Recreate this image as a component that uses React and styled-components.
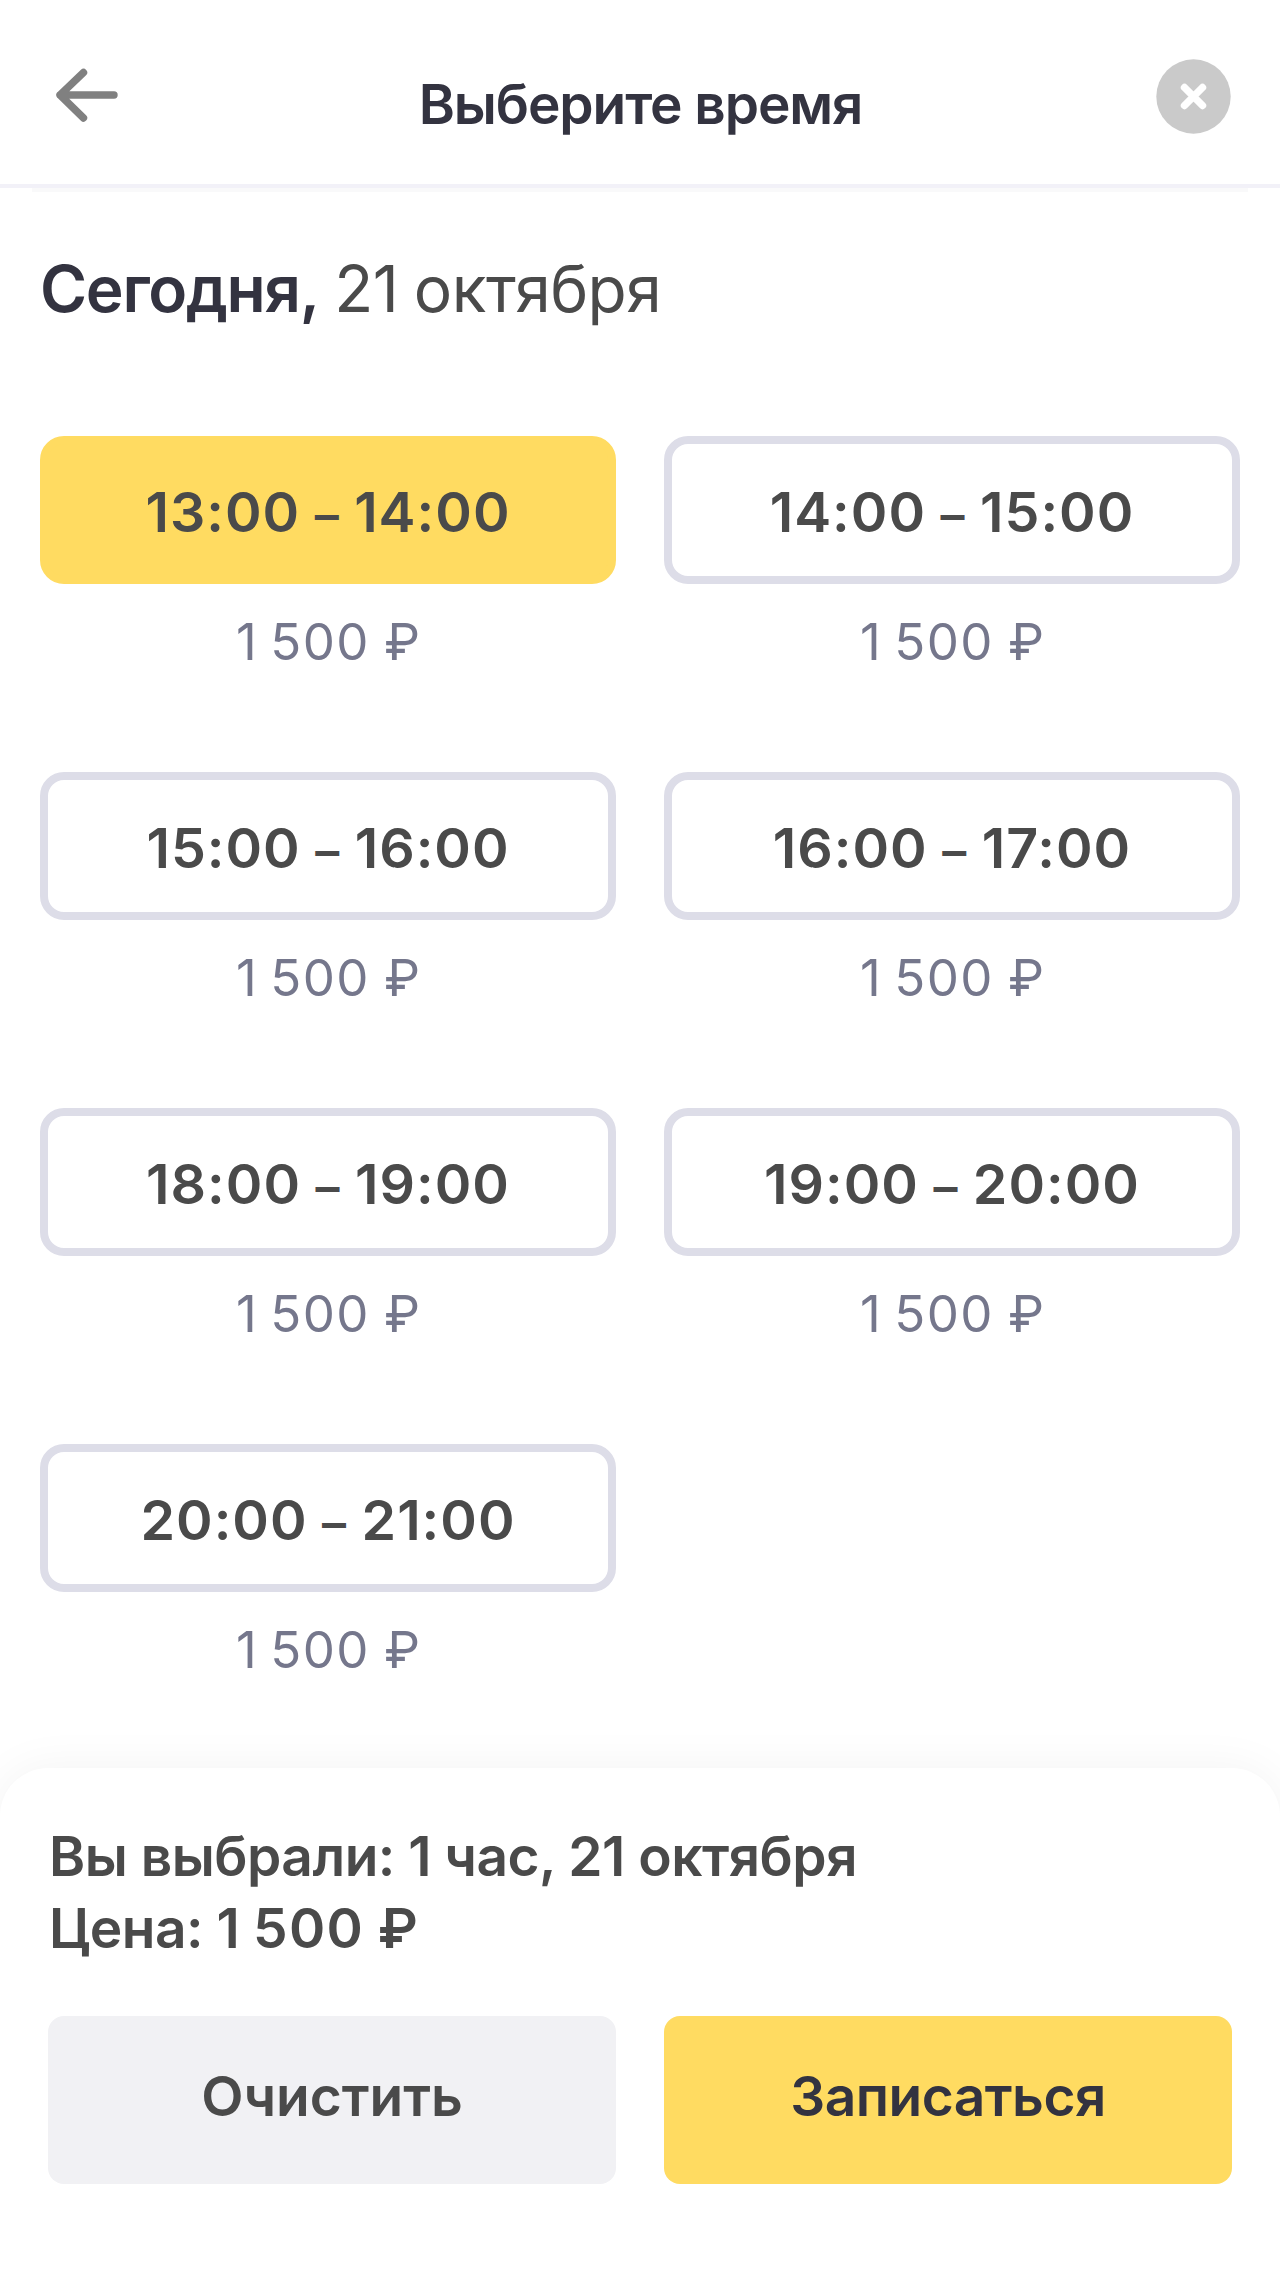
import React, { useState } from 'react'
import styled, { createGlobalStyle } from 'styled-components'

const YELLOW = "#ffdb61"
const DARK = "#333340"
const TEXT = "#4a4a4a"
const MUTED = "#75778c"
const BORDER = "#dddde8"

const slots = [
    { from: "13:00", to: "14:00", price: "1 500" },
    { from: "14:00", to: "15:00", price: "1 500" },
    { from: "15:00", to: "16:00", price: "1 500" },
    { from: "16:00", to: "17:00", price: "1 500" },
    { from: "18:00", to: "19:00", price: "1 500" },
    { from: "19:00", to: "20:00", price: "1 500" },
    { from: "20:00", to: "21:00", price: "1 500" },
]

const App = () => {
    const [selected, setSelected] = useState(0)

    return (
        <>
            <GlobalStyle />
            <Page>
                <Header>
                    <IconButton aria-label="Назад">
                        <svg width="72" height="60" viewBox="0 0 72 60">
                            <path
                                d="M64 29H10M33.5 6.5L10 29L33.5 52"
                                fill="none"
                                stroke="#808080"
                                strokeWidth="7.4"
                                strokeLinecap="round"
                                strokeLinejoin="round"
                            />
                        </svg>
                    </IconButton>
                    <Title>Выберите время</Title>
                    <IconButton aria-label="Закрыть">
                        <svg width="75" height="75" viewBox="0 0 75 75">
                            <circle cx="37.5" cy="37.5" r="37.2" fill="#cacaca" />
                            <path
                                d="M28.5 28.5L46.5 46.5M46.5 28.5L28.5 46.5"
                                stroke="#fff"
                                strokeWidth="7.4"
                                strokeLinecap="round"
                            />
                        </svg>
                    </IconButton>
                </Header>
                <Divider />
                <Main>
                    <DateTitle>
                        <b>Сегодня,</b> <span>21 октября</span>
                    </DateTitle>
                    <Slots>
                        {slots.map((slot, i) => (
                            <Slot key={slot.from}>
                                <SlotButton $active={i === selected} onClick={() => setSelected(i)}>
                                    {slot.from} <Dash>–</Dash> {slot.to}
                                </SlotButton>
                                <Price>
                                    <Amount>{slot.price}</Amount> ₽
                                </Price>
                            </Slot>
                        ))}
                    </Slots>
                </Main>
                <Sheet>
                    <Summary>Вы выбрали: 1 час, 21 октября</Summary>
                    <Summary>Цена: <Amount>1 500</Amount> ₽</Summary>
                    <Actions>
                        <Action onClick={() => setSelected(-1)}>Очистить</Action>
                        <Action $primary>Записаться</Action>
                    </Actions>
                </Sheet>
            </Page>
        </>
    )
}

export default App


const GlobalStyle = createGlobalStyle`
    *{
        box-sizing: border-box;
    }
    body{
        margin: 0;
        background-color: #fff;
    }
    button{
        font-family: inherit;
        border: none;
        padding: 0;
        cursor: pointer;
    }
`

const Page = styled.div`
    display: flex;
    flex-direction: column;
    width: 1280px;
    height: 2272px;
    overflow: hidden;
    background-color: #fff;
    color: ${TEXT};
    font-family: Inter, "Liberation Sans", sans-serif;
    /* keeps the colon on the baseline between digits */
    font-feature-settings: "calt" 0;
`

const Header = styled.header`
    display: flex;
    justify-content: space-between;
    align-items: flex-start;
    height: 184px;
    padding: 0 49px 0 50px;
`

const IconButton = styled.button`
    display: flex;
    justify-content: center;
    width: 75px;
    margin-top: 59px;
    background: none;

    &:first-child{
        justify-content: flex-start;
        margin-top: 66px;
    }
`

const Title = styled.h1`
    margin: 71px 0 0;
    font-size: 55px;
    line-height: 67px;
    font-weight: 600;
    letter-spacing: -1.1px;
    color: ${DARK};
    white-space: nowrap;
`

const Divider = styled.div`
    flex-shrink: 0;
    height: 8px;
    border-top: 4px solid #f2f1f8;

    &::after{
        content: "";
        display: block;
        height: 4px;
        margin: 0 32px;
        background-color: #f9f9fa;
    }
`

const Main = styled.main`
    flex: 1;
    padding: 58px 40px 0;
`

const DateTitle = styled.h2`
    margin: 0 0 108px;
    font-size: 64px;
    line-height: 78px;
    font-weight: 400;
    letter-spacing: -0.5px;
    word-spacing: -2px;
    white-space: nowrap;

    b{
        font-weight: 600;
        letter-spacing: -1.3px;
        color: ${DARK};
    }
`

const Slots = styled.div`
    display: grid;
    grid-template-columns: 1fr 1fr;
    column-gap: 48px;
    row-gap: 80px;
`

const Slot = styled.div`
    display: flex;
    flex-direction: column;
    height: 256px;
`

const SlotButton = styled.button`
    height: 148px;
    padding-top: 3px;
    border: 8px solid ${({ $active }) => ($active ? YELLOW : BORDER)};
    border-radius: 24px;
    background-color: ${({ $active }) => ($active ? YELLOW : "#fff")};
    color: ${TEXT};
    font-size: 55.5px;
    font-weight: 600;
    letter-spacing: 1px;
    word-spacing: -0.5px;
    white-space: nowrap;
`

const Dash = styled.span`
    font-size: 48px;
`

const Amount = styled.span`
    letter-spacing: 1.4px;
    word-spacing: -3.5px;
`

const Price = styled.div`
    margin-top: 27px;
    text-align: center;
    font-size: 51px;
    line-height: 62px;
    font-weight: 400;
    color: ${MUTED};
`

const Sheet = styled.footer`
    flex-shrink: 0;
    height: 504px;
    padding: 52px 48px 0;
    border-radius: 48px 48px 0 0;
    background-color: #fff;
    box-shadow: 0 0 48px rgba(0, 0, 0, 0.05);
`

const Summary = styled.div`
    padding-left: 1px;
    font-size: 55px;
    line-height: 72px;
    font-weight: 600;
    letter-spacing: -0.5px;
    white-space: nowrap;
`

const Actions = styled.div`
    display: grid;
    grid-template-columns: 1fr 1fr;
    gap: 48px;
    margin-top: 52px;
`

const Action = styled.button`
    height: 168px;
    padding-bottom: 8px;
    border-radius: 16px;
    background-color: ${({ $primary }) => ($primary ? YELLOW : "#f1f1f4")};
    color: ${({ $primary }) => ($primary ? DARK : TEXT)};
    font-size: 55px;
    font-weight: 600;
    letter-spacing: ${({ $primary }) => ($primary ? "-0.5px" : "0")};
`
